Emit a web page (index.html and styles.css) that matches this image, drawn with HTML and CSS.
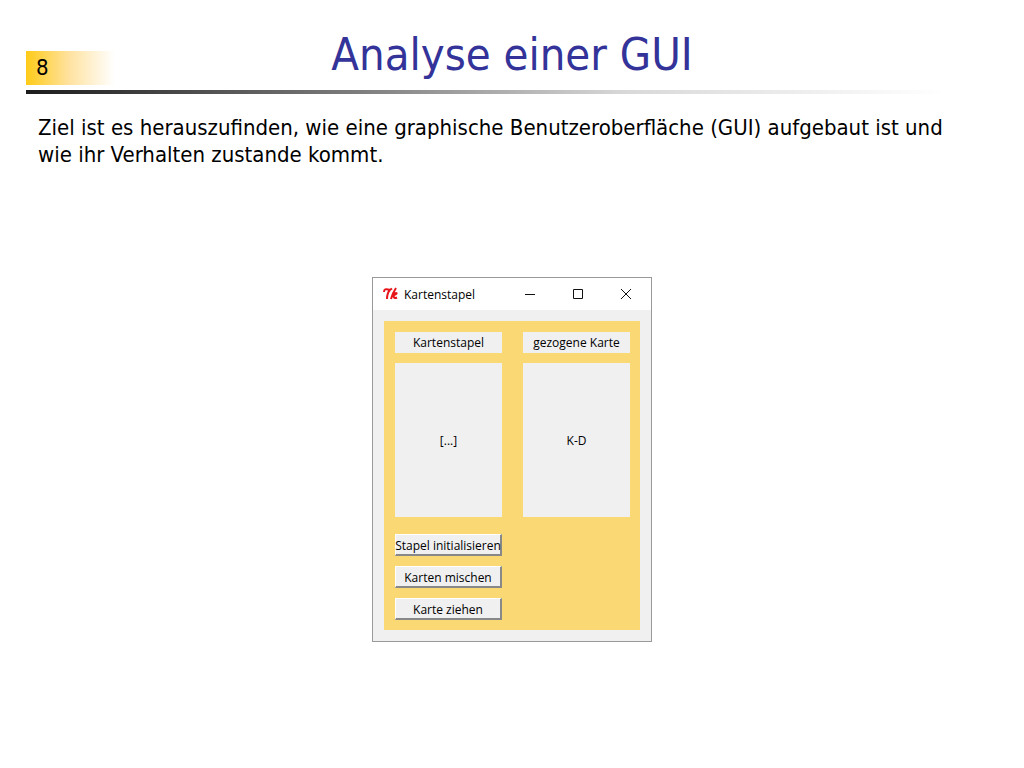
FILE: index.html
```html
<!DOCTYPE html>
<html lang="de">
<head>
<meta charset="utf-8">
<meta name="viewport" content="width=device-width, initial-scale=1">
<title>Analyse einer GUI</title>
<link rel="stylesheet" href="styles.css">
</head>
<body>
<main class="slide">
  <header class="slide-header">
    <span class="slide-number">8</span>
    <h1 class="slide-title">Analyse einer GUI</h1>
  </header>
  <hr class="rule">
  <p class="intro">Ziel ist es herauszufinden, wie eine graphische Benutzeroberfläche (GUI) aufgebaut ist und wie ihr Verhalten zustande kommt.</p>
  <section class="window" aria-label="Kartenstapel">
    <div class="titlebar">
      <svg class="logo" viewBox="0 0 16 14" aria-hidden="true">
        <path d="M1 5C1 2 3 2 5 2.500S8 2.500 9 1.500M7 3C5 5 4 8 4 12M13 1C11 4 9 8 8 12M9 9C12 8 15 6 13 6S10 8 10.500 9S11 12 14 10.500" />
      </svg>
      <span class="window-title">Kartenstapel</span>
      <div class="window-controls">
        <button class="control" type="button" aria-label="Minimieren"><svg viewBox="0 0 12 12"><path d="M1 6.500H11"/></svg></button>
        <button class="control" type="button" aria-label="Maximieren"><svg viewBox="0 0 12 12"><path d="M1.500 1.500H10.500V10.500H1.500Z"/></svg></button>
        <button class="control" type="button" aria-label="Schließen"><svg viewBox="0 0 12 12"><path d="M1 1L11 11M11 1L1 11"/></svg></button>
      </div>
    </div>
    <div class="window-body">
      <div class="table">
        <div class="caption">Kartenstapel</div>
        <div class="caption">gezogene Karte</div>
        <div class="card">[...]</div>
        <div class="card">K-D</div>
        <div class="actions">
          <button class="action" type="button">Stapel initialisieren</button>
          <button class="action" type="button">Karten mischen</button>
          <button class="action" type="button">Karte ziehen</button>
        </div>
      </div>
    </div>
  </section>
</main>
</body>
</html>
```
FILE: styles.css
```css
* { box-sizing: border-box; }
body {
  margin: 0;
  background: #fff;
  color: #000;
  font-family: "DejaVu Sans Condensed", Tahoma, sans-serif;
}
.slide { padding: 24px 26px; }
.slide-header {
  display: grid;
  grid-template-columns: 96px 1fr 96px;
  align-items: end;
}
.slide-number {
  height: 34px;
  margin-bottom: 5px;
  padding-left: 10px;
  background: linear-gradient(90deg, #ffcb18, #ffe2a0 45%, #fff 92%);
  font-size: 22px;
  line-height: 34px;
}
.slide-title {
  margin: 0;
  padding-bottom: 5px;
  color: #333399;
  font-size: 45px;
  font-weight: 400;
  line-height: 61px;
  text-align: center;
}
.rule {
  height: 4px;
  margin: 0 52px 0 0;
  border: 0;
  background: linear-gradient(90deg, #1c1c1c, #808080 37%, #d8d8d8 65%, #fff);
}
.intro {
  margin: 20px 0 109px;
  padding: 0 32px 0 12px;
  font-size: 22px;
  line-height: 27px;
}
.window {
  width: 280px;
  margin: 0 auto;
  border: 1px solid #999;
  background: #f0f0f0;
  font-family: "Open Sans", "Segoe UI", sans-serif;
  font-size: 12px;
}
.titlebar {
  display: flex;
  align-items: center;
  height: 32px;
  padding-left: 10px;
  background: #fff;
}
.logo {
  width: 16px;
  height: 14px;
  margin-right: 5px;
  fill: none;
  stroke: #e8141c;
  stroke-width: 2;
}
.window-controls {
  display: flex;
  margin-left: auto;
  padding-right: 1px;
}
.control {
  display: grid;
  place-items: center;
  width: 48px;
  height: 32px;
  padding: 0;
  border: 0;
  background: none;
}
.control svg {
  width: 12px;
  height: 12px;
  fill: none;
  stroke: #111;
}
.window-body { padding: 11px; }
.table {
  display: grid;
  grid-template-columns: repeat(2, minmax(0, 1fr));
  gap: 10px 21px;
  padding: 11px 10px 10px 11px;
  background: #fad975;
}
.caption, .card {
  display: grid;
  place-items: center;
  height: 21px;
  background: #f0f0f0;
  white-space: nowrap;
}
.card { height: 154px; }
.actions {
  display: grid;
  gap: 10px;
  padding-top: 7px;
}
.action {
  display: flex;
  align-items: center;
  justify-content: center;
  min-width: 0;
  height: 22px;
  padding: 1px 0 0;
  border: solid;
  border-width: 1px 2px 2px 1px;
  border-color: #fff #888 #888 #fff;
  background: #f0f0f0;
  color: #000;
  font: inherit;
  white-space: nowrap;
}
```
